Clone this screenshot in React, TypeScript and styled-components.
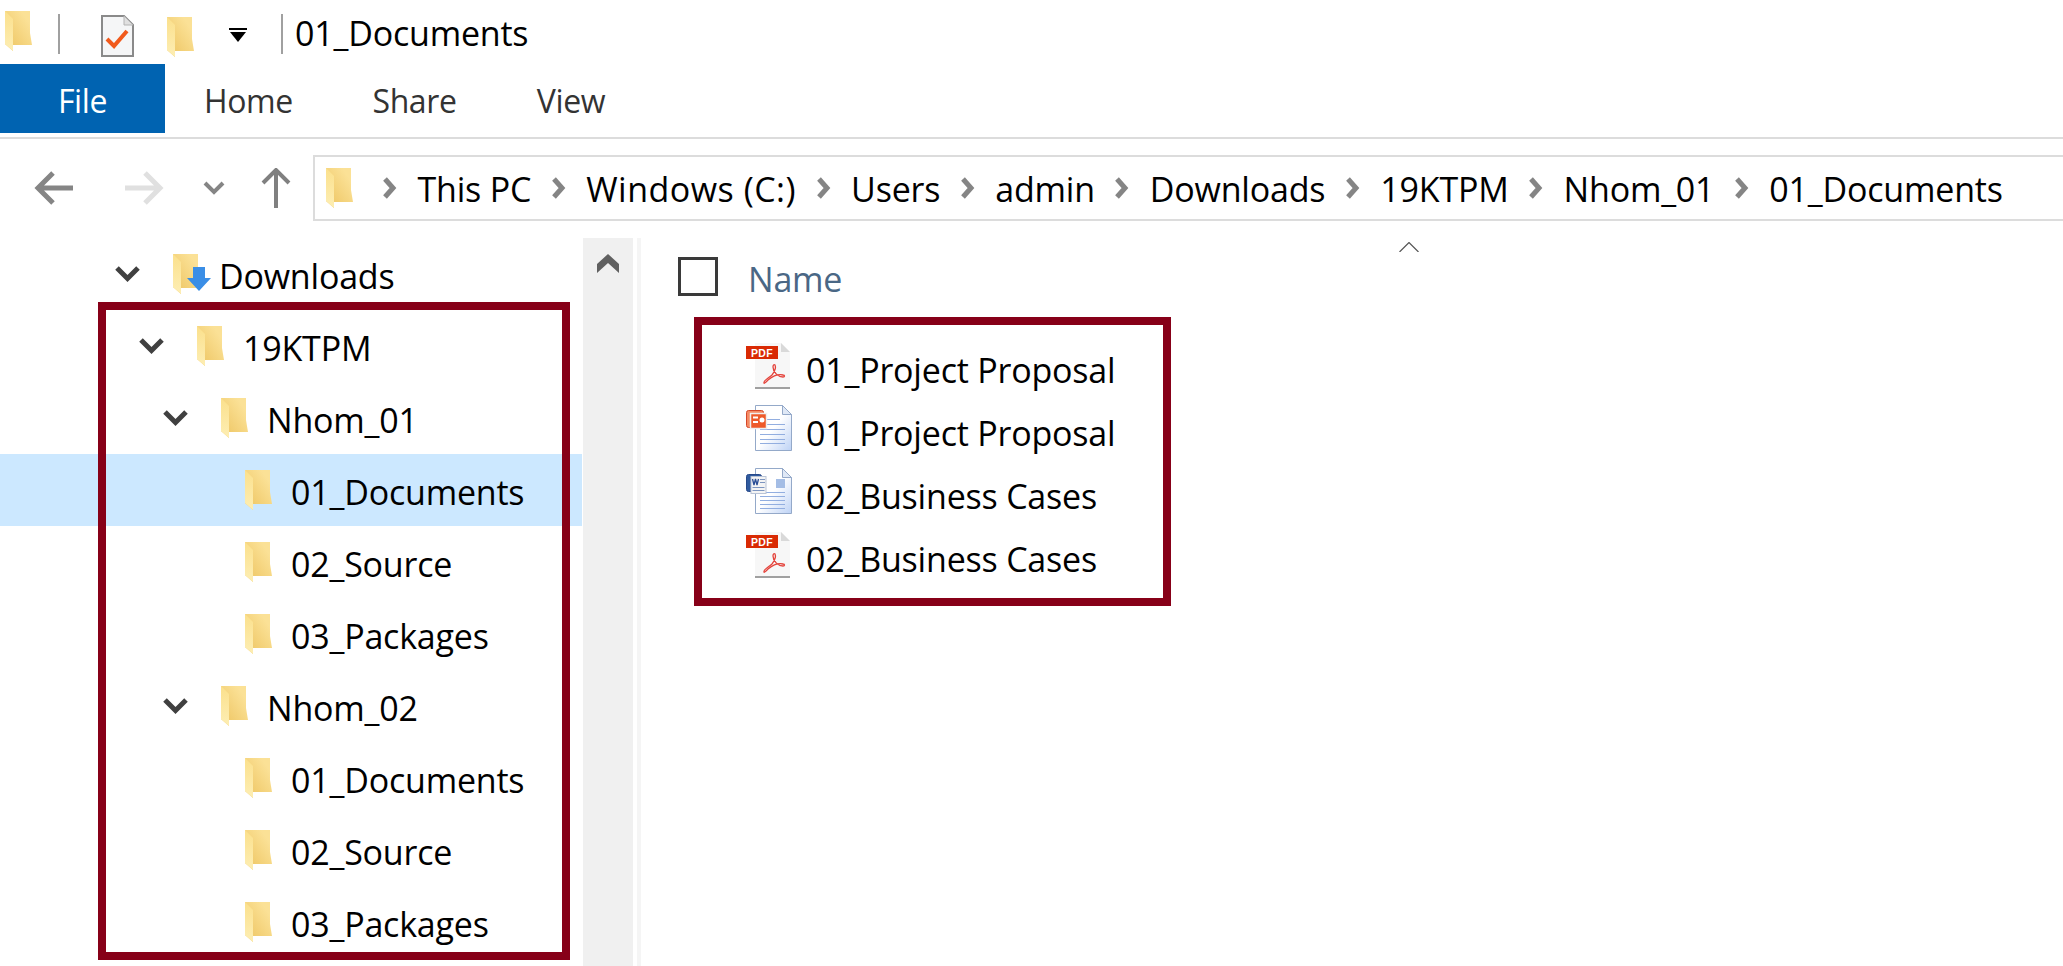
import { Fragment } from "react";
import styled, { createGlobalStyle } from "styled-components";

const GlobalStyle = createGlobalStyle`
  html, body {
    margin: 0;
    padding: 0;
    background: #ffffff;
  }
  * {
    box-sizing: border-box;
  }
`;

const Window = styled.div`
  width: 2063px;
  height: 966px;
  overflow: hidden;
  background: #ffffff;
  color: #000000;
  font-family: "Open Sans", "Noto Sans", "Liberation Sans", sans-serif;
  font-size: 34px;
  letter-spacing: -0.2px;
`;

const TitleBar = styled.div`
  height: 64px;
  display: flex;
  align-items: flex-start;
  padding: 11px 0 0 5px;
`;

const TitleSep = styled.div<{ $left: number; $right: number }>`
  width: 2px;
  height: 40px;
  margin: 3px ${(p) => p.$right}px 0 ${(p) => p.$left}px;
  background: #a0a0a0;
`;

const TitleItem = styled.div<{ $left: number; $top: number }>`
  display: flex;
  margin-left: ${(p) => p.$left}px;
  margin-top: ${(p) => p.$top}px;
`;

const TitleText = styled.div`
  line-height: 44px;
  margin-left: 12px;
`;

const Ribbon = styled.div`
  height: 75px;
  display: flex;
  align-items: flex-start;
  border-bottom: 2px solid #dcdcdc;
`;

const RibbonTab = styled.div<{ $active?: boolean; $width: number }>`
  width: ${(p) => p.$width}px;
  height: 69px;
  display: flex;
  align-items: center;
  justify-content: center;
  padding-top: 4px;
  font-size: 32px;
  letter-spacing: -0.4px;
  background: ${(p) => (p.$active ? "#0063b1" : "transparent")};
  color: ${(p) => (p.$active ? "#ffffff" : "#333333")};
`;

const NavRow = styled.div`
  height: 81px;
  display: flex;
  padding-top: 16px;
`;

const NavButtons = styled.div`
  width: 313px;
  height: 65px;
  flex: none;
  display: flex;
  align-items: center;
  padding-left: 34px;
`;

const NavIcon = styled.svg<{ $left?: number }>`
  flex: none;
  margin-left: ${(p) => p.$left ?? 0}px;
`;

const AddressBar = styled.div`
  flex: 1;
  height: 66px;
  display: flex;
  align-items: center;
  padding-left: 11px;
  border: 2px solid #dcdcdc;
  border-right: none;
`;

const Crumb = styled.span<{ $spacing?: number }>`
  line-height: 44px;
  padding-top: 2px;
  white-space: nowrap;
  letter-spacing: ${(p) => p.$spacing ?? -0.2}px;
`;

const CrumbArrow = styled.svg<{ $first?: boolean }>`
  width: 16px;
  height: 22px;
  flex: none;
  margin: 0 19.5px 0 ${(p) => (p.$first ? 29 : 19.5)}px;
`;

const Main = styled.div`
  display: flex;
  height: 728px;
  margin-top: 18px;
`;

const Sidebar = styled.div`
  width: 582px;
  flex: none;
`;

const Tree = styled.div`
  position: relative;
`;

const TreeRow = styled.div<{ $level: number; $selected?: boolean }>`
  height: 72px;
  display: flex;
  align-items: center;
  padding-left: ${(p) => 114 + p.$level * 24}px;
  background: ${(p) => (p.$selected ? "#cce8ff" : "transparent")};
`;

const Twisty = styled.svg`
  width: 27px;
  height: 18px;
  flex: none;
  margin-right: 32px;
`;

const TwistySpace = styled.div`
  width: 27px;
  flex: none;
  margin-right: 32px;
`;

const RowLabel = styled.span`
  margin-left: 19px;
  padding-top: 3px;
  line-height: 44px;
  white-space: nowrap;
`;

const FolderWrap = styled.div`
  position: relative;
  width: 27px;
  height: 40px;
  flex: none;
`;

const DownArrow = styled.svg`
  position: absolute;
  left: 14px;
  top: 13px;
  width: 24px;
  height: 24px;
`;

const TreeFrame = styled.div`
  position: absolute;
  left: 98px;
  top: 64px;
  width: 472px;
  height: 658px;
  border: 8px solid #870018;
  pointer-events: none;
`;

const ScrollTrack = styled.div`
  width: 50px;
  margin-left: 1px;
  flex: none;
  background: #f0f0f0;
  display: flex;
  justify-content: center;
  padding-top: 16px;
`;

const ScrollUp = styled.svg`
  width: 22px;
  height: 20px;
`;

const Divider = styled.div`
  width: 4px;
  margin-left: 4px;
  flex: none;
  background: #f5f5f5;
`;

const Content = styled.div`
  position: relative;
  flex: 1;
`;

const SortCaret = styled.svg`
  position: absolute;
  left: 758px;
  top: 4px;
  width: 20px;
  height: 10px;
`;

const HeaderRow = styled.div`
  height: 79px;
  display: flex;
  align-items: flex-start;
  padding: 19px 0 0 37px;
`;

const CheckBox = styled.div`
  width: 40px;
  height: 39px;
  border: 3px solid #3a3a3a;
  flex: none;
`;

const NameColumn = styled.div`
  margin-left: 30px;
  margin-top: 2px;
  color: #4a6785;
  line-height: 40px;
`;

const FilesFrame = styled.div`
  width: 477px;
  height: 289px;
  margin-left: 53px;
  padding: 9px 0 0 44px;
  border: 8px solid #870018;
  display: flex;
  flex-direction: column;
`;

const FileRow = styled.div`
  height: 63px;
  display: flex;
  align-items: center;
  gap: 13px;
`;

const FileName = styled.span`
  padding-top: 8px;
  white-space: nowrap;
`;

const Folder = () => (
  <svg width="27" height="40" viewBox="0 0 27 40">
    <defs>
      <linearGradient id="fldBack" x1="0" y1="1" x2="1" y2="0">
        <stop offset="0.1" stopColor="#eec664" />
        <stop offset="0.8" stopColor="#fbe196" />
      </linearGradient>
      <linearGradient id="fldFlap" x1="0" y1="0" x2="0" y2="1">
        <stop offset="0" stopColor="#fbe08c" />
        <stop offset="1" stopColor="#fdeeb4" />
      </linearGradient>
    </defs>
    <path d="M0 0h25v22l2 12H8v6L0 33z" fill="url(#fldBack)" />
    <path d="M0 0l8 8v32l-8-7z" fill="url(#fldFlap)" />
  </svg>
);

const PdfIcon = () => (
  <svg width="47" height="47" viewBox="0 0 47 47">
    <path d="M9 1h26l9 9v36H9z" fill="#f7f7f7" />
    <path d="M35 1l9 9h-9z" fill="#d9d9d9" />
    <rect x="9" y="45" width="35" height="2" fill="#a0a0a0" />
    <rect x="0" y="4" width="32" height="13" fill="#d92a04" />
    <text
      x="16"
      y="14.5"
      textAnchor="middle"
      fontFamily="Liberation Sans"
      fontSize="10.5"
      fontWeight="700"
      fill="#ffffff"
      letterSpacing="0.4"
    >
      PDF
    </text>
    <path
      d="M18 41c-1-2 3-4 8-8 3-4 4-8 3-10-1-1-2 0-2 2 0 5 5 10 10 10 2 0 2-2 0-2-4-1-10 1-15 5-2 2-4 4-4 3z"
      fill="none"
      stroke="#e4423a"
      strokeWidth="1.3"
    />
  </svg>
);

const DocLines = ({ rows, x = 14, width = 25 }: { rows: number[]; x?: number; width?: number }) => (
  <>
    {rows.map((y) => (
      <rect key={y} x={x} y={y} width={width} height="1" fill="#92aee0" />
    ))}
  </>
);

const DocPage = ({ id }: { id: string }) => (
  <>
    <defs>
      <linearGradient id={id} x1="0" y1="0" x2="1" y2="1">
        <stop offset="0.5" stopColor="#ffffff" />
        <stop offset="1" stopColor="#bdd2f5" />
      </linearGradient>
    </defs>
    <path d="M9.500 .5h27l9 9v36h-36z" fill={`url(#${id})`} stroke="#94a9c9" />
    <path d="M36.500 .5v9h9z" fill="#dfe8f6" stroke="#94a9c9" />
  </>
);

const PptIcon = () => (
  <svg width="47" height="47" viewBox="0 0 47 47">
    <DocPage id="pptPage" />
    <DocLines rows={[14]} x={20} width={14} />
    <DocLines rows={[19, 24, 29, 34, 38]} />
    <rect x=".5" y="5.500" width="17" height="17" rx="2" fill="#f58a63" stroke="#d5482a" />
    <rect x="4.500" y="8.500" width="16" height="15" fill="#ee5a2a" stroke="#efefef" strokeWidth="1.500" />
    <rect x="7" y="11.500" width="5" height="2" fill="#ffffff" />
    <rect x="7" y="16" width="5" height="2" fill="#ffffff" />
    <circle cx="16" cy="15" r="2.500" fill="#ffffff" />
  </svg>
);

const WordIcon = () => (
  <svg width="47" height="47" viewBox="0 0 47 47">
    <DocPage id="wordPage" />
    <DocLines rows={[24, 28, 32, 36, 40]} x={14} width={25} />
    <rect x="30" y="11" width="9" height="9" fill="#a4bde5" />
    <rect x=".5" y="6.500" width="15" height="17" rx="2" fill="#2f5a9e" stroke="#27498a" />
    <rect x="5" y="8.500" width="15" height="17" fill="#f4f4f4" stroke="#bac4d6" />
    <path d="M6.500 11l1.500 6 1.500-6 1.500 6 1.500-6" fill="none" stroke="#2c4f96" strokeWidth="1.300" />
    <rect x="14" y="11" width="5" height="1" fill="#7e96c0" />
    <rect x="14" y="14" width="5" height="1" fill="#7e96c0" />
    <rect x="6.500" y="19" width="12" height="1" fill="#7e96c0" />
    <rect x="6.500" y="22" width="12" height="1" fill="#7e96c0" />
  </svg>
);

const ChevronDown = () => (
  <Twisty viewBox="0 0 27 18">
    <path d="M3 3l10.500 10.500L24 3" fill="none" stroke="#404040" strokeWidth="5" />
  </Twisty>
);

const CrumbChevron = ({ first }: { first?: boolean }) => (
  <CrumbArrow viewBox="0 0 16 22" $first={first}>
    <path d="M3 2l8 9-8 9" fill="none" stroke="#858585" strokeWidth="5" />
  </CrumbArrow>
);

const breadcrumbs = [
  { name: "This PC" },
  { name: "Windows (C:)", spacing: 0.5 },
  { name: "Users" },
  { name: "admin" },
  { name: "Downloads" },
  { name: "19KTPM" },
  { name: "Nhom_01" },
  { name: "01_Documents" },
];

const treeRows = [
  { name: "19KTPM", level: 1, open: true },
  { name: "Nhom_01", level: 2, open: true },
  { name: "01_Documents", level: 3, selected: true },
  { name: "02_Source", level: 3 },
  { name: "03_Packages", level: 3 },
  { name: "Nhom_02", level: 2, open: true },
  { name: "01_Documents", level: 3 },
  { name: "02_Source", level: 3 },
  { name: "03_Packages", level: 3 },
];

const files = [
  { name: "01_Project Proposal", icon: <PdfIcon /> },
  { name: "01_Project Proposal", icon: <PptIcon /> },
  { name: "02_Business Cases", icon: <WordIcon /> },
  { name: "02_Business Cases", icon: <PdfIcon /> },
];

const App = () => {
  return (
    <Window>
      <GlobalStyle />
      <TitleBar>
        <Folder />
        <TitleSep $left={26} $right={41} />
        <TitleItem $left={0} $top={4}>
          <svg width="33" height="42" viewBox="0 0 33 42">
            <path d="M1 1h22l9 9v31H1z" fill="#f5f6f7" stroke="#8a8a8a" strokeWidth="2" />
            <path d="M23 1v9h9z" fill="#e0e0e0" stroke="#b4b4b4" />
            <path d="M6 24l7 7L26 16" fill="none" stroke="#f15a1c" strokeWidth="4" />
          </svg>
        </TitleItem>
        <TitleItem $left={33} $top={6}>
          <Folder />
        </TitleItem>
        <TitleItem $left={35} $top={17}>
          <svg width="18" height="15" viewBox="0 0 18 15">
            <rect x="0" y="0" width="18" height="2" fill="#000000" />
            <path d="M1 4h16l-8 10z" fill="#000000" />
          </svg>
        </TitleItem>
        <TitleSep $left={34} $right={0} />
        <TitleText>01_Documents</TitleText>
      </TitleBar>

      <Ribbon>
        <RibbonTab $active $width={165}>File</RibbonTab>
        <RibbonTab $width={167}>Home</RibbonTab>
        <RibbonTab $width={165}>Share</RibbonTab>
        <RibbonTab $width={148}>View</RibbonTab>
      </Ribbon>

      <NavRow>
        <NavButtons>
          <NavIcon width="39" height="36" viewBox="0 0 39 36">
            <path d="M39 18H5M19 3L4 18l15 15" fill="none" stroke="#858585" strokeWidth="5" />
          </NavIcon>
          <NavIcon width="39" height="36" viewBox="0 0 39 36" $left={52}>
            <path d="M0 18h34M20 3l15 15-15 15" fill="none" stroke="#e0e0e0" strokeWidth="5" />
          </NavIcon>
          <NavIcon width="22" height="14" viewBox="0 0 22 14" $left={39}>
            <path d="M2 2l9 9 9-9" fill="none" stroke="#858585" strokeWidth="4" />
          </NavIcon>
          <NavIcon width="30" height="40" viewBox="0 0 30 40" $left={36}>
            <path d="M15 40V3M2 15L15 2l13 13" fill="none" stroke="#808080" strokeWidth="4" />
          </NavIcon>
        </NavButtons>
        <AddressBar>
          <Folder />
          <CrumbChevron first />
          {breadcrumbs.map((crumb, i) => (
            <Fragment key={i}>
              <Crumb $spacing={crumb.spacing}>{crumb.name}</Crumb>
              {i < breadcrumbs.length - 1 && <CrumbChevron />}
            </Fragment>
          ))}
        </AddressBar>
      </NavRow>

      <Main>
        <Sidebar>
          <Tree>
            <TreeRow $level={0}>
              <ChevronDown />
              <FolderWrap>
                <Folder />
                <DownArrow viewBox="0 0 24 24">
                  <path d="M6 0h12v11h6L12 24 0 11h6z" fill="#3a8ee6" />
                </DownArrow>
              </FolderWrap>
              <RowLabel>Downloads</RowLabel>
            </TreeRow>
            {treeRows.map((row, i) => (
              <TreeRow key={i} $level={row.level} $selected={row.selected}>
                {row.open ? <ChevronDown /> : <TwistySpace />}
                <FolderWrap>
                  <Folder />
                </FolderWrap>
                <RowLabel>{row.name}</RowLabel>
              </TreeRow>
            ))}
            <TreeFrame />
          </Tree>
        </Sidebar>
        <ScrollTrack>
          <ScrollUp viewBox="0 0 22 20">
            <path d="M0 10L11 0l11 10v9L11 9 0 19z" fill="#606060" />
          </ScrollUp>
        </ScrollTrack>
        <Divider />
        <Content>
          <SortCaret viewBox="0 0 20 10">
            <path d="M.5 10L10 .5 19.500 10" fill="none" stroke="#555555" strokeWidth="1.200" />
          </SortCaret>
          <HeaderRow>
            <CheckBox />
            <NameColumn>Name</NameColumn>
          </HeaderRow>
          <FilesFrame>
            {files.map((file, i) => (
              <FileRow key={i}>
                {file.icon}
                <FileName>{file.name}</FileName>
              </FileRow>
            ))}
          </FilesFrame>
        </Content>
      </Main>
    </Window>
  );
};

export default App;
